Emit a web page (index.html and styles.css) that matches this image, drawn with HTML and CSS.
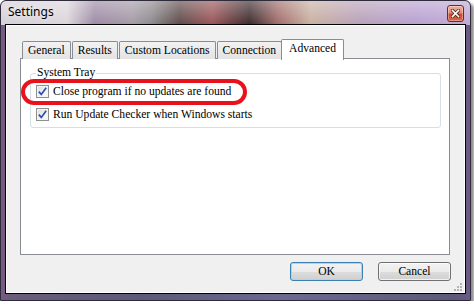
FILE: index.html
```html
<!DOCTYPE html>
<html lang="en">
<head>
    <meta charset="UTF-8">
    <title>Settings</title>
    <link rel="stylesheet" href="styles.css">
</head>
<body>
    <div class="window">
        <div class="titlebar">
            <span class="title">Settings</span>
            <span class="close">
                <svg width="9" height="9" viewBox="0 0 9 9">
                    <path d="M1.5 1.5 L7.5 7.5 M7.5 1.5 L1.5 7.5" stroke="#5a2a22" stroke-width="3.2" stroke-linecap="square"/>
                    <path d="M1.5 1.5 L7.5 7.5 M7.5 1.5 L1.5 7.5" stroke="#fff" stroke-width="1.6" stroke-linecap="square"/>
                </svg>
            </span>
        </div>
        <div class="client">
            <div class="tabs">
                <div class="tab">General</div>
                <div class="tab">Results</div>
                <div class="tab">Custom Locations</div>
                <div class="tab">Connection</div>
                <div class="tab active">Advanced</div>
            </div>
            <div class="panel">
                <fieldset class="group">
                    <legend>System Tray</legend>
                    <label class="option">
                        <span class="check">
                            <svg width="9" height="9" viewBox="0 0 9 9"><path d="M0.8 4.6 L3.3 7.4 L8.2 0.8" fill="none" stroke="#2a4fb8" stroke-width="1.7"/></svg>
                        </span>
                        Close program if no updates are found
                    </label>
                    <label class="option">
                        <span class="check">
                            <svg width="9" height="9" viewBox="0 0 9 9"><path d="M0.8 4.6 L3.3 7.4 L8.2 0.8" fill="none" stroke="#2a4fb8" stroke-width="1.7"/></svg>
                        </span>
                        Run Update Checker when Windows starts
                    </label>
                </fieldset>
                <!-- red highlight drawn over the screenshot -->
                <div class="mark"></div>
            </div>
            <div class="buttons">
                <button class="btn default">OK</button>
                <button class="btn">Cancel</button>
            </div>
            <svg class="grip" width="9" height="9" viewBox="0 0 9 9" fill="#b4b4b4">
                <rect x="7" y="1" width="2" height="2"/>
                <rect x="4" y="4" width="2" height="2"/>
                <rect x="7" y="4" width="2" height="2"/>
                <rect x="1" y="7" width="2" height="2"/>
                <rect x="4" y="7" width="2" height="2"/>
                <rect x="7" y="7" width="2" height="2"/>
            </svg>
        </div>
    </div>
</body>
</html>
```

FILE: styles.css
```css
*{
    margin: 0;
    padding: 0;
    box-sizing: border-box;
}
body{
    background-color: #fff;
    font-family: "Liberation Serif", serif;
    font-size: 11.6px;
    color: #000;
}
.window{
    width: 471px;
    height: 301px;
    border: 1px solid #2e2c3a;
    border-radius: 6px 6px 0 0;
    padding: 0 4px 5px 4px;
    box-shadow: 3px 3px 3px rgba(0, 0, 0, 0.45);
    background:
        linear-gradient(180deg, rgba(255,255,255,0.35), rgba(255,255,255,0) 24px),
        linear-gradient(90deg, #d4d0d8 0%, #dcd6da 14%, #9d8aa5 20%, #a49aa6 28%, #8c8a8e 32%, #5e4a4a 38%, #9a5456 45%, #3a2a2c 53%, #a06a68 59%, #c8b0a0 66%, #b8a0b8 76%, #b8a0d0 88%, #c0a8d4 100%) top / 100% 24px no-repeat,
        linear-gradient(90deg, #7a5a86 0, #6a5c7a 2%, #5c5a7a 30%, #6a6a8e 60%, #5c5a7a 97%, #6e5a86 100%);
}
.titlebar{
    height: 23px;
    display: flex;
    justify-content: space-between;
    align-items: flex-start;
    padding: 0 2px 0 3px;
}
.title{
    font-family: "Noto Sans", sans-serif;
    font-size: 12px;
    line-height: 22px;
    color: #000;
    text-shadow: 0 0 6px rgba(255,255,255,0.9);
}
.close{
    margin-top: 4px;
    width: 17px;
    height: 17px;
    border: 1px solid #6d2a1f;
    border-radius: 3px;
    display: flex;
    align-items: center;
    justify-content: center;
    background: linear-gradient(180deg, #eeb0a0 0%, #e08a72 45%, #cc4a2c 55%, #d8684a 100%);
    box-shadow: inset 0 0 0 1px rgba(255,255,255,0.35);
}
.client{
    position: relative;
    height: 270px;
    border: 1px solid #000;
    background-color: #f0f0f0;
    box-shadow: inset 0 0 0 1px #fff;
    padding: 13px 15px 0 14px;
}
.tabs{
    display: flex;
    align-items: flex-end;
    height: 21px;
    padding-left: 2px;
    position: relative;
    z-index: 1;
}
.tab{
    height: 18px;
    line-height: 17px;
    padding: 0 5px;
    margin-right: 1px;
    border: 1px solid #898c95;
    border-bottom: none;
    border-radius: 2px 2px 0 0;
    background: linear-gradient(180deg, #f2f2f2, #e3e3e3);
    text-align: center;
}
.tab.active{
    height: 21px;
    margin-left: -2px;
    margin-bottom: -1px;
    padding: 0 7px;
    background: #fff;
    line-height: 17px;
}
.panel{
    position: relative;
    height: 197px;
    margin-top: -1px;
    border: 1px solid #898c95;
    background-color: #fff;
    padding: 7px 8px 0 9px;
}
.group{
    border: 1px solid #d5dfe5;
    border-radius: 3px;
    padding: 0 5px 1px 5px;
}
.group legend{
    padding: 0 1px;
    line-height: 14px;
}
.option{
    display: flex;
    align-items: center;
    gap: 4px;
    height: 23px;
}
.check{
    width: 13px;
    height: 13px;
    border: 1px solid #8e8f8f;
    background: linear-gradient(135deg, #dcdcdc, #f6f6f6 70%);
    box-shadow: inset 0 0 0 1px #f4f4f4;
    display: flex;
    align-items: center;
    justify-content: center;
}
.mark{
    position: absolute;
    left: 0;
    top: 20px;
    width: 226px;
    height: 26px;
    border: 4px solid #e8121c;
    border-radius: 13px;
}
.buttons{
    display: flex;
    justify-content: flex-end;
    gap: 15px;
    margin-top: 7px;
    margin-right: -1px;
}
.btn{
    width: 73px;
    height: 19px;
    font-family: "Liberation Serif", serif;
    font-size: 11.6px;
    border: 1px solid #707070;
    border-radius: 3px;
    background: linear-gradient(180deg, #f2f2f2 0%, #ebebeb 50%, #dddddd 51%, #cfcfcf 100%);
    box-shadow: inset 0 0 0 1px rgba(255,255,255,0.7);
}
.btn.default{
    border-color: #3c7fb1;
    box-shadow: inset 0 0 0 1px #9fdcf4;
}
.grip{
    position: absolute;
    right: 3px;
    bottom: 2px;
}
```
